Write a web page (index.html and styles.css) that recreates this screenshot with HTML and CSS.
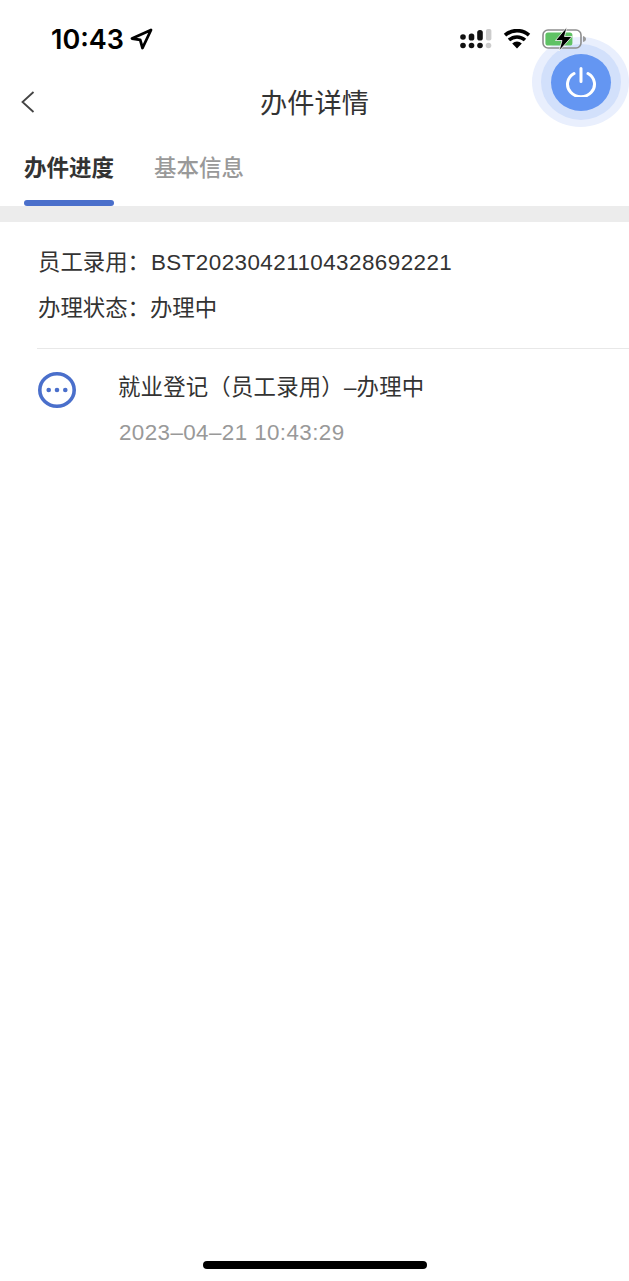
FILE: index.html
```html
<!DOCTYPE html>
<html lang="zh-CN">
<head>
    <meta charset="UTF-8">
    <meta name="viewport" content="width=device-width, initial-scale=1.0">
    <title>办件详情</title>
    <link rel="stylesheet" href="styles.css">
</head>
<body>
    <div class="phone">
        <div class="status-bar">
            <div class="status-left">
                <span class="clock">10:43</span>
                <svg class="location" width="24" height="24" viewBox="0 0 24 24">
                    <path d="M22 3 3 11.500l8.200 1.300 2.300 8.200z" fill="none" stroke="#000" stroke-width="2.800" stroke-linejoin="round"/>
                </svg>
            </div>
            <div class="status-right">
                <svg width="32" height="20" viewBox="0 0 32 20">
                    <circle cx="3" cy="8" r="2.800" fill="#111"/>
                    <circle cx="3" cy="16.500" r="2.800" fill="#111"/>
                    <circle cx="11.500" cy="16.500" r="2.800" fill="#111"/>
                    <circle cx="20" cy="16.500" r="2.800" fill="#111"/>
                    <circle cx="28.500" cy="16.500" r="2.800" fill="#ccc"/>
                    <rect x="8.700" y="4.500" width="5.600" height="7" rx="2.600" fill="#111"/>
                    <rect x="17.200" y="1" width="5.600" height="10.500" rx="2.600" fill="#111"/>
                    <rect x="26" y="0" width="5.400" height="11.500" rx="1.800" fill="#ccc"/>
                </svg>
                <svg class="wifi" width="28" height="20" viewBox="0 0 28 20">
                    <path d="M14 19.500 9.200 14.500a7 7 0 0 1 9.600 0z" fill="#000"/>
                    <path d="M6 11a12 12 0 0 1 16 0M2 6.200a18 18 0 0 1 24 0" fill="none" stroke="#000" stroke-width="3.600"/>
                </svg>
                <svg class="battery" width="46" height="24" viewBox="0 0 46 24">
                    <rect x="1" y="3" width="38" height="18" rx="5" fill="none" stroke="#8e8e8e" stroke-width="1.600"/>
                    <rect x="3.400" y="5.400" width="27" height="13.200" rx="2.600" fill="#5fc264"/>
                    <path d="M41 9v6c1.800-.5 3-1.500 3-3s-1.200-2.500-3-3z" fill="#9a9a9a"/>
                    <path d="M25 0 13.500 13.500h6.500L17 24 30 9.500h-7.500z" fill="#000" stroke="#fff" stroke-width=".8"/>
                </svg>
            </div>
        </div>

        <header class="nav-bar">
            <svg class="back" width="16" height="24" viewBox="0 0 16 24">
                <path d="M13.500 2 2.500 12l11 10" fill="none" stroke="#444" stroke-width="1.800"/>
            </svg>
            <h1>办件详情</h1>
        </header>

        <nav class="tabs">
            <a class="tab active">办件进度</a>
            <a class="tab">基本信息</a>
        </nav>

        <div class="info">
            <p>员工录用：<span class="latin">BST20230421104328692221</span></p>
            <p>办理状态：办理中</p>
        </div>

        <div class="step">
            <svg class="step-icon" width="38" height="36" viewBox="0 0 38 36">
                <ellipse cx="19" cy="18" rx="17.200" ry="16.200" fill="none" stroke="#4a6fcb" stroke-width="3.600"/>
                <circle cx="10.700" cy="18" r="2.300" fill="#4a6fcb"/>
                <circle cx="19" cy="18" r="2.300" fill="#4a6fcb"/>
                <circle cx="27.300" cy="18" r="2.300" fill="#4a6fcb"/>
            </svg>
            <div class="step-text">
                <div class="step-title">就业登记（员工录用）–办理中</div>
                <div class="step-time">2023–04–21 10:43:29</div>
            </div>
        </div>

        <div class="home-bar"></div>

        <div class="float-btn">
            <div class="float-mid">
                <div class="float-core">
                    <svg width="32" height="30" viewBox="0 0 32 30">
                        <path d="M9 6.500a13.500 12.500 0 1 0 14 0M16 1.500v13" fill="none" stroke="#fff" stroke-width="3" stroke-linecap="round"/>
                    </svg>
                </div>
            </div>
        </div>
    </div>
</body>
</html>
```

FILE: styles.css
```css
/* General styles */
html, body {
    margin: 0;
    padding: 0;
    background-color: #fff;
}

body {
    font-family: 'Liberation Sans', 'Noto Sans CJK SC', sans-serif;
    color: #333;
}

.phone {
    position: relative;
    width: 629px;
    height: 1281px;
    overflow: hidden;
    display: flex;
    flex-direction: column;
}

.status-bar {
    position: relative;
    z-index: 2;
    height: 70px;
    display: flex;
    justify-content: space-between;
    align-items: center;
    padding: 8px 41px 0 51px;
    box-sizing: border-box;
}

.status-left {
    display: flex;
    align-items: center;
    gap: 5px;
}

.clock {
    font-family: Inter, sans-serif;
    font-size: 27px;
    font-weight: 600;
    color: #000;
}

.status-right {
    display: flex;
    align-items: center;
    gap: 11px;
}

.nav-bar {
    height: 61px;
    padding-bottom: 4px;
    position: relative;
    display: flex;
    align-items: center;
    justify-content: center;
}

.nav-bar h1 {
    margin: 0;
    font-size: 27.200px;
    font-weight: 400;
    color: #333;
}

.back {
    position: absolute;
    left: 20px;
    top: 20px;
}

.tabs {
    height: 71px;
    display: flex;
    gap: 40px;
    padding-left: 24px;
    border-bottom: 16px solid #ececec;
}

.tab {
    height: 71px;
    line-height: 68px;
    font-size: 22.500px;
    color: #999;
    font-weight: 500;
}

.tab.active {
    color: #333;
    font-weight: 700;
    position: relative;
}

.tab.active::after {
    content: "";
    position: absolute;
    left: 0;
    right: 0;
    bottom: 0;
    height: 6px;
    border-radius: 3px;
    background-color: #4a6fcb;
}

.info {
    margin-left: 37px;
    padding: 18px 0 16px 1px;
    border-bottom: 1px solid #e8e8e8;
}

.info p {
    margin: 0;
    height: 46px;
    line-height: 46px;
    font-size: 22.400px;
    color: #333;
    white-space: nowrap;
}

.latin {
    margin-left: 1px;
    letter-spacing: 0.45px;
}

.step {
    display: flex;
    padding: 20px 0 0 38px;
}

.step-icon {
    margin-top: 3px;
}

.step-text {
    margin-left: 42px;
}

.step-title {
    font-size: 22.400px;
    line-height: 38px;
    letter-spacing: 0.2px;
    color: #333;
    white-space: nowrap;
}

.step-time {
    padding-left: 1px;
    font-size: 22.400px;
    line-height: 52px;
    letter-spacing: 0.4px;
    color: #999;
}

.home-bar {
    position: absolute;
    left: 203px;
    bottom: 12px;
    width: 224px;
    height: 8px;
    border-radius: 4px;
    background-color: #000;
}

/* floating power button over the header */
.float-btn {
    position: absolute;
    left: 532px;
    top: 37px;
    width: 97px;
    height: 90px;
    border-radius: 50%;
    background-color: #e9effd;
    display: flex;
    align-items: center;
    justify-content: center;
}

.float-mid {
    width: 80px;
    height: 76px;
    border-radius: 50%;
    background-color: #d2e0fb;
    display: flex;
    align-items: center;
    justify-content: center;
}

.float-core {
    width: 60px;
    height: 57px;
    border-radius: 50%;
    background-color: #6496f2;
    display: flex;
    align-items: center;
    justify-content: center;
}
```
